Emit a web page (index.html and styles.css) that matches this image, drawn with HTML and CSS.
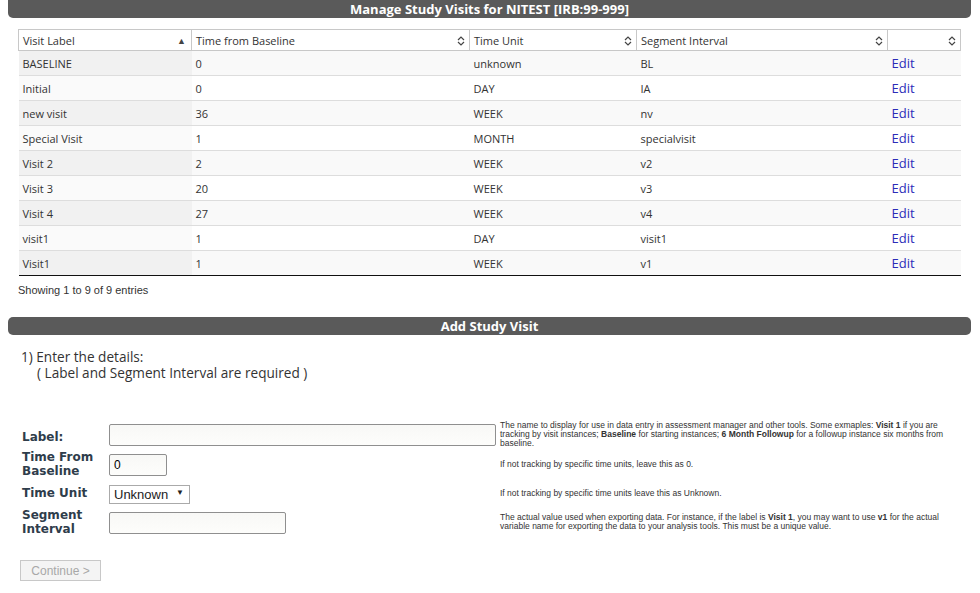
FILE: index.html
```html
<!DOCTYPE html>
<html lang="en">
<head>
  <meta charset="UTF-8">
  <title>Manage Study Visits</title>
  <link rel="stylesheet" href="styles.css">
</head>
<body>
  <div class="page">
    <div class="bar bar-top">Manage Study Visits for NITEST [IRB:99-999]</div>

    <table class="visits">
      <thead>
        <tr>
          <th class="col-label sorted">Visit Label <span class="sort-asc">&#9650;</span></th>
          <th class="col-time">Time from Baseline <svg class="sort" viewBox="0 0 8 10"><path d="M1 4 L4 1 L7 4 M1 6 L4 9 L7 6" /></svg></th>
          <th class="col-unit">Time Unit <svg class="sort" viewBox="0 0 8 10"><path d="M1 4 L4 1 L7 4 M1 6 L4 9 L7 6" /></svg></th>
          <th class="col-seg">Segment Interval <svg class="sort" viewBox="0 0 8 10"><path d="M1 4 L4 1 L7 4 M1 6 L4 9 L7 6" /></svg></th>
          <th class="col-edit"><svg class="sort" viewBox="0 0 8 10"><path d="M1 4 L4 1 L7 4 M1 6 L4 9 L7 6" /></svg></th>
        </tr>
      </thead>
      <tbody>
        <tr><td>BASELINE</td><td>0</td><td>unknown</td><td>BL</td><td><a href="#">Edit</a></td></tr>
        <tr><td>Initial</td><td>0</td><td>DAY</td><td>IA</td><td><a href="#">Edit</a></td></tr>
        <tr><td>new visit</td><td>36</td><td>WEEK</td><td>nv</td><td><a href="#">Edit</a></td></tr>
        <tr><td>Special Visit</td><td>1</td><td>MONTH</td><td>specialvisit</td><td><a href="#">Edit</a></td></tr>
        <tr><td>Visit 2</td><td>2</td><td>WEEK</td><td>v2</td><td><a href="#">Edit</a></td></tr>
        <tr><td>Visit 3</td><td>20</td><td>WEEK</td><td>v3</td><td><a href="#">Edit</a></td></tr>
        <tr><td>Visit 4</td><td>27</td><td>WEEK</td><td>v4</td><td><a href="#">Edit</a></td></tr>
        <tr><td>visit1</td><td>1</td><td>DAY</td><td>visit1</td><td><a href="#">Edit</a></td></tr>
        <tr><td>Visit1</td><td>1</td><td>WEEK</td><td>v1</td><td><a href="#">Edit</a></td></tr>
      </tbody>
    </table>
    <div class="info">Showing 1 to 9 of 9 entries</div>

    <div class="bar">Add Study Visit</div>

    <div class="step">
      1) Enter the details:<br>
      <span class="step-note">( Label and Segment Interval are required )</span>
    </div>

    <table class="visit-form">
      <tr class="row-label">
        <th>Label:</th>
        <td class="field"><input type="text" class="in-label"></td>
        <td class="help">The name to display for use in data entry in assessment manager and other tools. Some exmaples: <b>Visit 1</b> if you are tracking by visit instances; <b>Baseline</b> for starting instances; <b>6 Month Followup</b> for a followup instance six months from baseline.</td>
      </tr>
      <tr class="row-time">
        <th>Time From Baseline</th>
        <td class="field"><input type="text" class="in-time" value="0"></td>
        <td class="help">If not tracking by specific time units, leave this as 0.</td>
      </tr>
      <tr class="row-unit">
        <th>Time Unit</th>
        <td class="field">
          <span class="select-wrap">
            <select class="in-unit">
              <option selected>Unknown</option>
              <option>Day</option>
              <option>Week</option>
              <option>Month</option>
            </select>
            <span class="select-arrow">&#9660;</span>
          </span>
        </td>
        <td class="help">If not tracking by specific time units leave this as Unknown.</td>
      </tr>
      <tr class="row-seg">
        <th>Segment Interval</th>
        <td class="field"><input type="text" class="in-seg"></td>
        <td class="help">The actual value used when exporting data. For instance, if the label is <b>Visit 1</b>, you may want to use <b>v1</b> for the actual variable name for exporting the data to your analysis tools. This must be a unique value.</td>
      </tr>
    </table>

    <button class="continue" disabled>Continue &gt;</button>
  </div>
</body>
</html>
```

FILE: styles.css
```css
html, body {
  margin: 0;
  padding: 0;
  background: #ffffff;
  font-family: "Open Sans", Arial, sans-serif;
  color: #333;
}
.page {
  width: 963px;
  margin: 0 8px;
}
/* Dark section title bars */
.bar {
  height: 18px;
  line-height: 18px;
  background: #5a5a5a;
  color: #ffffff;
  font-weight: bold;
  font-size: 13px;
  text-align: center;
  border-radius: 5px;
}
.bar-top {
  border-radius: 0 0 5px 5px;
}
/* Visits list */
.visits {
  width: 943px;
  margin: 11px 10px 0 10px;
  border-collapse: collapse;
  font-size: 11px;
  table-layout: fixed;
}
.visits th {
  position: relative;
  height: 20px;
  padding: 0 18px 0 4px;
  border: 1px solid #c8c8c8;
  background: #ffffff;
  text-align: left;
  font-weight: normal;
  color: #333;
}
.visits .col-label { width: 150px; }
.visits .col-time { width: 255px; }
.visits .col-unit { width: 144px; }
.visits .col-seg { width: 228px; }
.visits th .sort,
.visits th .sort-asc {
  position: absolute;
  right: 4px;
  top: 6px;
}
.visits th .sort {
  width: 8px;
  height: 10px;
  fill: none;
  stroke: #444;
  stroke-width: 1.2;
}
.visits th .sort-asc {
  font-size: 9px;
  top: 4px;
  right: 5px;
  color: #444;
}
.visits td {
  height: 24px;
  padding: 0 4px;
  border-top: 1px solid #dddddd;
  color: #333;
}
.visits tbody tr:nth-child(odd) td { background: #f9f9f9; }
.visits tbody tr:nth-child(odd) td:first-child { background: #f1f1f1; }
.visits tbody tr:nth-child(even) td:first-child { background: #fafafa; }
.visits tbody tr:last-child td { border-bottom: 1px solid #111; }
.visits a {
  color: #2b2bb8;
  text-decoration: none;
  font-size: 13px;
}
.info {
  margin: 8px 0 0 10px;
  height: 33px;
  font-family: Arial, "Liberation Sans", sans-serif;
  font-size: 11px;
  color: #333;
}
/* Add visit form */
.step {
  margin: 14px 0 0 13px;
  font-size: 13.6px;
  line-height: 16px;
  color: #333;
}
.step-note {
  padding-left: 16px;
}
.visit-form {
  margin: 38px 0 0 12px;
  border-collapse: collapse;
}
.visit-form th {
  width: 85px;
  padding: 0 2px;
  text-align: left;
  vertical-align: middle;
  font-family: "DejaVu Sans", Verdana, sans-serif;
  font-size: 12px;
  line-height: 14px;
  color: #2f3d4b;
}
.row-label th {
  padding-top: 5px;
}
.visit-form td.field {
  width: 390px;
  padding: 3px 0;
}
.visit-form .help {
  width: 448px;
  padding-left: 1px;
  font-family: Arial, "Liberation Sans", sans-serif;
  font-size: 8.5px;
  line-height: 9px;
  color: #333;
  vertical-align: middle;
}
.visit-form input {
  height: 22px;
  box-sizing: border-box;
  border: 1px solid #8f8f8f;
  border-radius: 2px;
  background: linear-gradient(#f8f8f6, #fdfdfb);
  font-family: Arial, "Liberation Sans", sans-serif;
  font-size: 12px;
  padding: 0 4px;
  margin: 0;
}
.in-label { width: 387px; }
.in-time { width: 58px; }
.in-seg { width: 177px; }
.select-wrap {
  position: relative;
  display: inline-block;
}
.in-unit {
  appearance: none;
  -webkit-appearance: none;
  width: 81px;
  height: 19px;
  border: 1px solid #aaa;
  background: #ffffff;
  font-family: Arial, "Liberation Sans", sans-serif;
  font-size: 13px;
  padding: 0 4px;
  margin: 0;
  color: #222;
}
.select-arrow {
  position: absolute;
  right: 6px;
  top: 4px;
  font-size: 8px;
  color: #222;
  pointer-events: none;
}
.continue {
  margin: 23px 0 0 12px;
  width: 81px;
  height: 21px;
  border: 1px solid #c8c8c8;
  background: #f4f4f4;
  color: #a8a8a8;
  font-family: Arial, "Liberation Sans", sans-serif;
  font-size: 12px;
  padding: 0;
}
```
